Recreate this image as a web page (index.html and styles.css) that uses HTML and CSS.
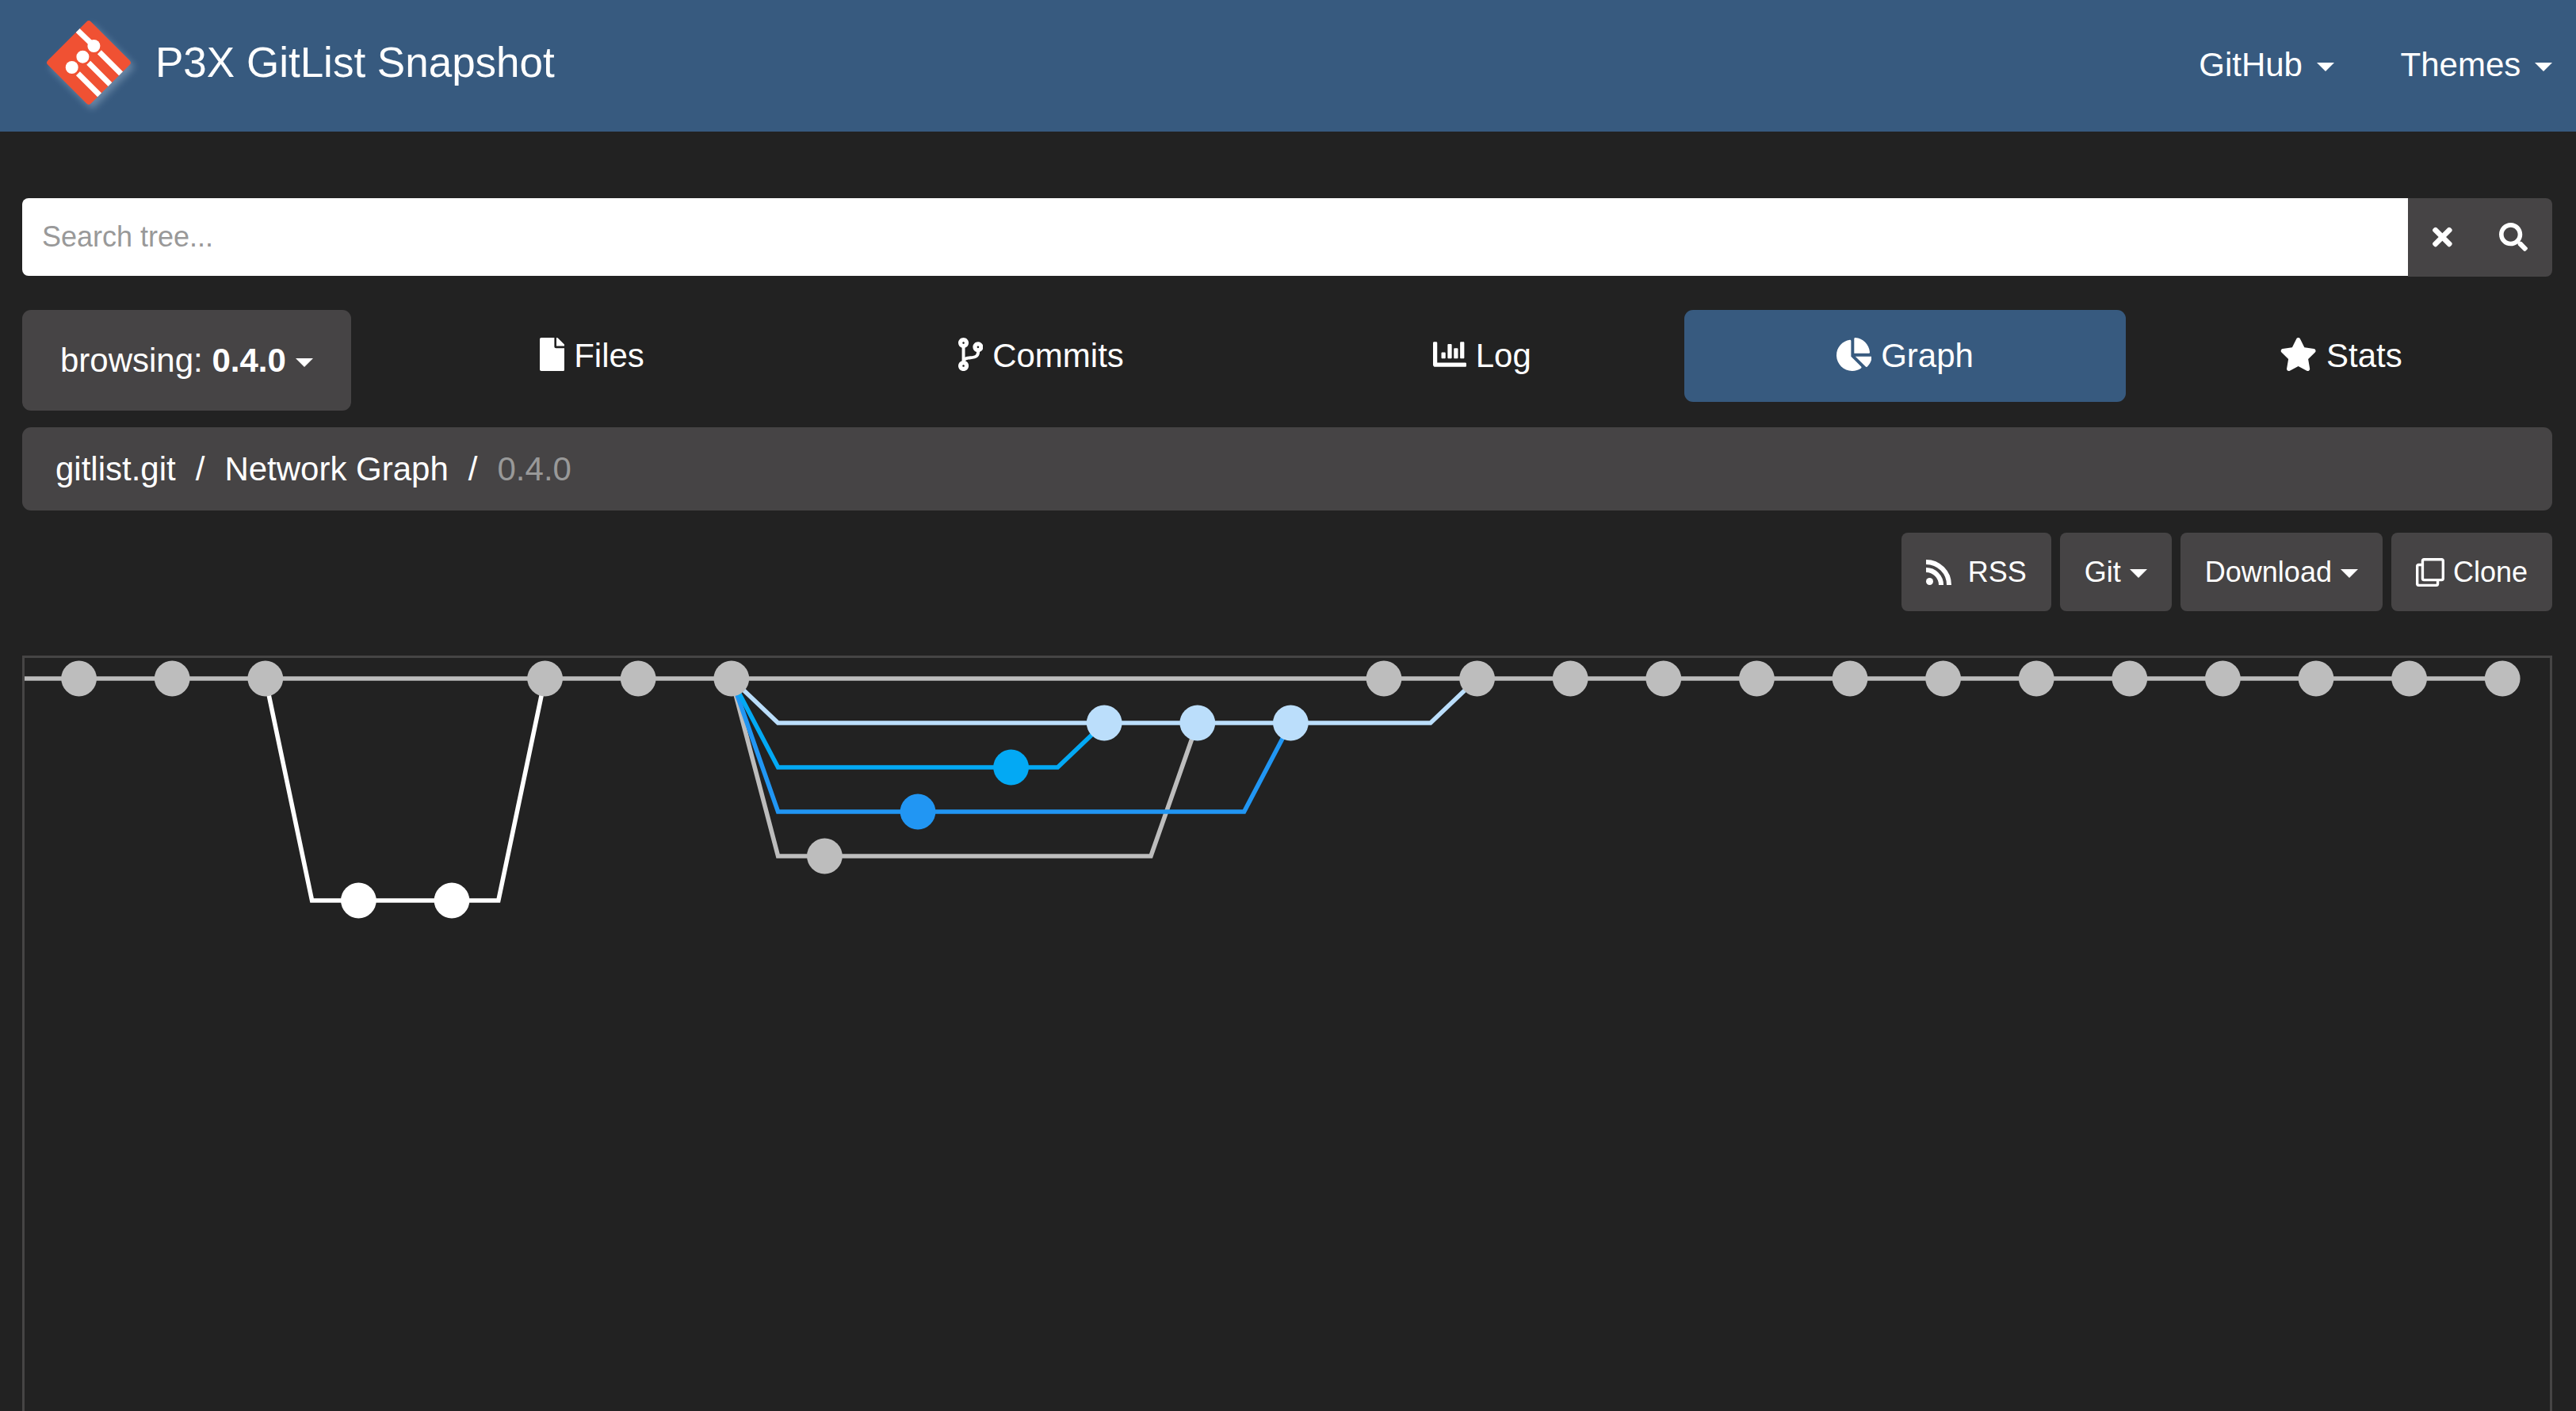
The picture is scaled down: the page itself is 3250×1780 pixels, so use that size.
FILE: index.html
```html
<!DOCTYPE html>
<html lang="en">
<head>
<meta charset="utf-8">
<title>P3X GitList Snapshot</title>
<link rel="stylesheet" href="styles.css">
</head>
<body>
<header class="navbar">
  <a class="brand" href="#">
    <svg class="logo" viewBox="0 0 108 108" aria-hidden="true">
      <defs><clipPath id="diamond"><rect x="15.5" y="15.5" width="77" height="77" rx="4" transform="rotate(45 54 54)"/></clipPath></defs>
      <g clip-path="url(#diamond)">
        <rect width="108" height="108" fill="#f05133"/>
        <g stroke="#fff" stroke-width="7">
          <path d="M36 9.500 60.400 33M40.400 67.700 72 99.300M53.700 54.300 86 86.600M67.400 40.700 100 73.300"/>
        </g>
        <g fill="#fff"><circle cx="32.700" cy="60" r="8"/><circle cx="46.400" cy="46.700" r="8"/><circle cx="60.400" cy="33" r="8"/></g>
      </g>
    </svg>
    <span>P3X GitList Snapshot</span>
  </a>
  <nav class="menu">
    <a href="#">GitHub <span class="caret"></span></a>
    <a href="#">Themes <span class="caret"></span></a>
  </nav>
</header>
<main class="content">
  <form class="search">
    <input type="text" placeholder="Search tree..." aria-label="Search tree">
    <button type="button" class="clear" aria-label="Clear"><svg class="icon" viewBox="0 0 352 512"><path d="M242.720 256l100.070-100.070c12.280-12.280 12.280-32.190 0-44.480l-22.240-22.240c-12.280-12.280-32.190-12.280-44.480 0L176 189.280 75.930 89.210c-12.280-12.280-32.190-12.280-44.480 0L9.210 111.450c-12.280 12.280-12.280 32.190 0 44.480L109.280 256 9.210 356.070c-12.280 12.280-12.280 32.190 0 44.480l22.240 22.240c12.280 12.280 32.200 12.280 44.480 0L176 322.720l100.070 100.070c12.280 12.280 32.200 12.280 44.480 0l22.240-22.240c12.280-12.280 12.280-32.190 0-44.480L242.720 256z"/></svg></button>
    <button type="submit" class="submit" aria-label="Search"><svg class="icon" viewBox="0 0 512 512"><path d="M505 442.700L405.300 343c-4.500-4.500-10.600-7-17-7H372c27.600-35.300 44-79.700 44-128C416 93.100 322.900 0 208 0S0 93.100 0 208s93.100 208 208 208c48.300 0 92.700-16.400 128-44v16.300c0 6.400 2.500 12.500 7 17l99.700 99.700c9.400 9.400 24.600 9.400 33.900 0l28.300-28.300c9.400-9.400 9.400-24.600.1-34zM208 336c-70.700 0-128-57.200-128-128 0-70.700 57.200-128 128-128 70.700 0 128 57.200 128 128 0 70.700-57.200 128-128 128z"/></svg></button>
  </form>

  <div class="toolbar">
    <button type="button" class="branch">browsing: <strong>0.4.0</strong> <span class="caret"></span></button>
    <nav class="tabs">
      <a href="#"><svg class="icon" viewBox="0 0 384 512"><path d="M224 136V0H24C10.700 0 0 10.700 0 24v464c0 13.300 10.700 24 24 24h336c13.300 0 24-10.700 24-24V160H248c-13.200 0-24-10.800-24-24zm160-14.100v6.100H256V0h6.100c6.400 0 12.500 2.500 17 7l97.900 98c4.500 4.500 7 10.600 7 16.900z"/></svg>Files</a>
      <a href="#"><svg class="icon" viewBox="0 0 384 512"><path d="M384 144c0-44.200-35.800-80-80-80s-80 35.800-80 80c0 36.400 24.300 67.100 57.500 76.800-.6 16.100-4.200 28.500-11 36.900-15.400 19.200-49.300 22.400-85.200 25.700-28.200 2.600-57.400 5.400-81.300 16.900v-144c32.500-10.200 56-40.500 56-76.300 0-44.200-35.800-80-80-80S0 35.800 0 80c0 35.800 23.500 66.100 56 76.300v199.300C23.500 365.900 0 396.200 0 432c0 44.200 35.800 80 80 80s80-35.800 80-80c0-34-21.200-63.100-51.200-74.600 3.100-5.200 7.800-9.800 14.900-13.400 16.200-8.200 40.400-10.400 66.100-12.800 42.200-3.900 90-8.400 118.200-43.400 14-17.400 21.100-39.800 21.600-67.900 31.600-10.800 54.400-40.700 54.400-75.900zM80 64c8.800 0 16 7.200 16 16s-7.200 16-16 16-16-7.200-16-16 7.200-16 16-16zm0 384c-8.800 0-16-7.200-16-16s7.200-16 16-16 16 7.200 16 16-7.200 16-16 16zm224-320c8.800 0 16 7.200 16 16s-7.200 16-16 16-16-7.200-16-16 7.200-16 16-16z"/></svg>Commits</a>
      <a href="#"><svg class="icon" viewBox="0 0 512 512"><path d="M332.800 320h38.400c6.400 0 12.800-6.400 12.800-12.800V172.800c0-6.400-6.400-12.800-12.800-12.800h-38.400c-6.400 0-12.800 6.400-12.800 12.800v134.400c0 6.400 6.400 12.800 12.800 12.800zm96 0h38.400c6.400 0 12.800-6.400 12.800-12.800V76.800c0-6.400-6.400-12.800-12.800-12.800h-38.400c-6.400 0-12.800 6.400-12.800 12.800v230.400c0 6.400 6.400 12.800 12.800 12.800zm-288 0h38.400c6.400 0 12.800-6.400 12.800-12.800v-70.400c0-6.400-6.400-12.800-12.800-12.800h-38.400c-6.400 0-12.800 6.400-12.800 12.800v70.400c0 6.400 6.400 12.800 12.800 12.800zm96 0h38.400c6.400 0 12.800-6.400 12.800-12.800V108.800c0-6.400-6.400-12.800-12.800-12.800h-38.400c-6.400 0-12.800 6.400-12.800 12.800v198.400c0 6.400 6.400 12.800 12.800 12.800zM496 384H64V80c0-8.840-7.160-16-16-16H16C7.160 64 0 71.160 0 80v336c0 17.670 14.330 32 32 32h464c8.840 0 16-7.160 16-16v-32c0-8.840-7.160-16-16-16z"/></svg>Log</a>
      <a href="#" class="active" aria-current="page"><svg class="icon" viewBox="0 0 544 512"><path d="M527.790 288H290.500l158.030 158.030c6.040 6.040 15.980 6.530 22.190.68 38.700-36.460 65.320-85.610 73.130-140.860 1.340-9.460-6.510-17.850-16.060-17.850zm-15.830-64.800C503.720 103.740 408.260 8.280 288.800.04 279.680-.59 272 7.100 272 16.240V240h223.770c9.140 0 16.820-7.680 16.190-16.800zM224 288V50.710c0-9.550-8.390-17.400-17.840-16.060C86.990 51.490-4.100 155.600.14 280.370 4.500 408.510 114.830 513.590 243.030 511.980c50.400-.63 96.970-16.870 135.260-44.030 7.900-5.600 8.420-17.230 1.570-24.080L224 288z"/></svg>Graph</a>
      <a href="#"><svg class="icon" viewBox="0 0 576 512"><path d="M259.300 17.800L194 150.200 47.900 171.500c-26.200 3.800-36.700 36.100-17.700 54.600l105.700 103-25 145.500c-4.500 26.300 23.200 46 46.400 33.700L288 439.600l130.700 68.700c23.200 12.200 50.900-7.400 46.400-33.700l-25-145.500 105.700-103c19-18.500 8.500-50.800-17.700-54.600L382 150.200 316.700 17.800c-11.700-23.600-45.600-23.900-57.400 0z"/></svg>Stats</a>
    </nav>
  </div>

  <nav class="breadcrumb" aria-label="Breadcrumb">
    <a href="#">gitlist.git</a><span>/</span><a href="#">Network Graph</a><span>/</span><span class="current">0.4.0</span>
  </nav>

  <div class="actions">
    <button type="button" class="rss"><svg class="icon" viewBox="0 0 32 32"><circle cx="4.500" cy="27.500" r="4.500"/><path d="M0 13a19 19 0 0 1 19 19M0 3a29 29 0 0 1 29 29" fill="none" stroke="currentColor" stroke-width="6"/></svg>RSS</button>
    <button type="button">Git <span class="caret"></span></button>
    <button type="button">Download <span class="caret"></span></button>
    <button type="button"><svg class="icon" viewBox="0 0 512 512"><path d="M464 0H144c-26.510 0-48 21.490-48 48v48H48c-26.510 0-48 21.490-48 48v320c0 26.510 21.490 48 48 48h320c26.510 0 48-21.490 48-48v-48h48c26.510 0 48-21.490 48-48V48c0-26.510-21.490-48-48-48zM362 464H54a6 6 0 0 1-6-6V150a6 6 0 0 1 6-6h42v224c0 26.510 21.490 48 48 48h224v42a6 6 0 0 1-6 6zm96-96H150a6 6 0 0 1-6-6V54a6 6 0 0 1 6-6h308a6 6 0 0 1 6 6v308a6 6 0 0 1-6 6z"/></svg>Clone</button>
  </div>

  <section class="graph" aria-label="Network graph">
    <svg class="network">
      <g class="lines">
        <path class="main" d="M0 26H3126"/>
        <path class="white" d="M303.800 26 362.600 306H597.800L656.600 26"/>
        <path class="main" d="M891.800 26 950.600 250H1421L1479.800 82"/>
        <path class="blue" d="M891.800 26 950.600 194H1538.600L1597.400 82"/>
        <path class="cyan" d="M891.800 26 950.600 138H1303.400L1362.200 82"/>
        <path class="pale" d="M891.800 26 950.600 82H1773.800L1832.600 26"/>
      </g>
      <g class="main">
        <circle cx="68.600" cy="26" r="22.400"/><circle cx="186.200" cy="26" r="22.400"/><circle cx="303.800" cy="26" r="22.400"/>
        <circle cx="656.600" cy="26" r="22.400"/><circle cx="774.200" cy="26" r="22.400"/><circle cx="891.800" cy="26" r="22.400"/>
        <circle cx="1009.400" cy="250" r="22.400"/>
        <circle cx="1715" cy="26" r="22.400"/><circle cx="1832.600" cy="26" r="22.400"/><circle cx="1950.200" cy="26" r="22.400"/>
        <circle cx="2067.800" cy="26" r="22.400"/><circle cx="2185.400" cy="26" r="22.400"/><circle cx="2303" cy="26" r="22.400"/>
        <circle cx="2420.600" cy="26" r="22.400"/><circle cx="2538.200" cy="26" r="22.400"/><circle cx="2655.800" cy="26" r="22.400"/>
        <circle cx="2773.400" cy="26" r="22.400"/><circle cx="2891" cy="26" r="22.400"/><circle cx="3008.600" cy="26" r="22.400"/>
        <circle cx="3126.200" cy="26" r="22.400"/>
      </g>
      <g class="white"><circle cx="421.400" cy="306" r="22.400"/><circle cx="539" cy="306" r="22.400"/></g>
      <g class="blue"><circle cx="1127" cy="194" r="22.400"/></g>
      <g class="cyan"><circle cx="1244.600" cy="138" r="22.400"/></g>
      <g class="pale"><circle cx="1362.200" cy="82" r="22.400"/><circle cx="1479.800" cy="82" r="22.400"/><circle cx="1597.400" cy="82" r="22.400"/></g>
    </svg>
  </section>
</main>
</body>
</html>
```
FILE: styles.css
```css
* { box-sizing: border-box; }

body {
  margin: 0;
  min-height: 100vh;
  display: flex;
  flex-direction: column;
  background: #222;
  color: #fff;
  font: 42px/60px "Liberation Sans", Arial, sans-serif;
}

a { color: inherit; text-decoration: none; }

button {
  border: 0;
  background: #464445;
  color: inherit;
  font: inherit;
  white-space: nowrap;
}

.icon { height: 1em; width: auto; flex: none; fill: currentColor; }

.caret {
  display: inline-block;
  vertical-align: middle;
  border: 11px solid transparent;
  border-top-color: currentColor;
  border-bottom: 0;
}

.navbar {
  display: flex;
  justify-content: space-between;
  height: 166px;
  padding: 0 30px 0 58px;
  background: #375a7f;
}

.brand {
  display: flex;
  align-items: center;
  gap: 30px;
  padding-bottom: 8px;
  font-size: 53px;
}

.logo {
  width: 108px;
  height: 108px;
  filter: drop-shadow(4px 5px 5px rgba(200, 220, 240, 0.35));
}

.menu {
  display: flex;
  align-items: center;
  gap: 84px;
  padding-bottom: 2px;
}

.menu .caret { margin-left: 6px; }

.content {
  flex: 1;
  display: flex;
  flex-direction: column;
  padding: 84px 30px 0 28px;
}

.search {
  display: flex;
  align-items: flex-start;
  margin-bottom: 42px;
  font-size: 36px;
}

.search input {
  flex: 1;
  min-width: 0;
  height: 98px;
  padding: 0 25px;
  border: 0;
  border-radius: 8px 0 0 8px;
  background: #fff;
  color: #222;
  font: inherit;
}

.search input::placeholder { color: #999; opacity: 1; }

.search button {
  display: flex;
  align-items: center;
  height: 99px;
  padding: 0 31px 2px;
}

.search .clear { padding-right: 28px; }
.search .submit { border-radius: 0 8px 8px 0; }

.toolbar {
  display: flex;
  align-items: flex-start;
  gap: 44px;
  margin-bottom: 21px;
}

.branch {
  height: 127px;
  padding: 0 48px;
  border-radius: 11px;
}

.tabs {
  flex: 1;
  display: grid;
  grid-template-columns: 520fr 602fr 500fr 556fr 533fr;
  gap: 5px;
}

.tabs a {
  display: flex;
  align-items: center;
  justify-content: center;
  gap: 12px;
  height: 116px;
  border-radius: 11px;
}

.tabs .icon { margin-bottom: 4px; }
.tabs .active { background: #375a7f; }

.breadcrumb {
  display: flex;
  align-items: center;
  gap: 25px;
  height: 105px;
  margin-bottom: 28px;
  padding: 0 42px;
  border-radius: 11px;
  background: #464445;
}

.breadcrumb .current { color: #999; }

.actions {
  display: flex;
  justify-content: flex-end;
  gap: 11px;
  margin-bottom: 56px;
  font-size: 36px;
}

.actions button {
  display: flex;
  align-items: center;
  gap: 11px;
  height: 99px;
  padding: 0 31px;
  border-radius: 8px;
}

.actions .rss { gap: 21px; }
.actions .rss .icon { height: 32px; }
.actions .caret { margin-top: 4px; }

.graph {
  flex: 1;
  border: 3px solid #464545;
  border-bottom: 0;
}

.network { display: block; width: 100%; height: 332px; }
.network .lines path { fill: none; stroke: currentColor; stroke-width: 5.6px; }
.network circle { fill: currentColor; }
.network .main { color: #bdbdbd; }
.network .white { color: #fff; }
.network .blue { color: #2196f3; }
.network .cyan { color: #03a9f4; }
.network .pale { color: #bbdefb; }
```
